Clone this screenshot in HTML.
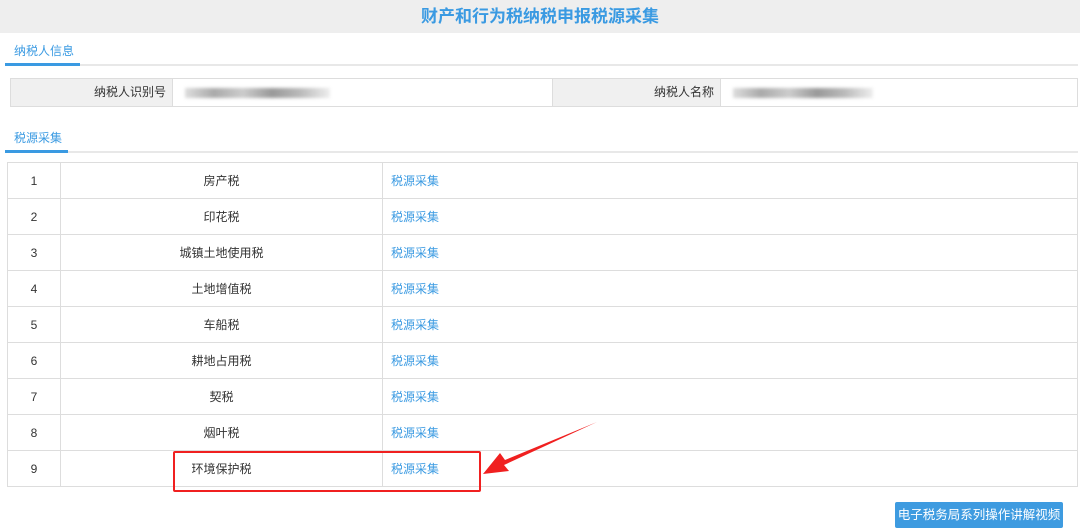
<!DOCTYPE html>
<html><head><meta charset="utf-8"><style>
*{margin:0;padding:0;box-sizing:border-box}
body{width:1080px;height:532px;overflow:hidden;background:#fff;font-family:"Liberation Sans","Noto Sans CJK SC",sans-serif;font-size:12px;color:#333;position:relative}
.hdr{position:absolute;left:0;top:0;width:1080px;height:33px;background:#eeeeee;text-align:center;line-height:34px;color:#3a9ae2;font-size:17px;font-weight:bold}
.tab{position:absolute;left:5px;height:2px;background:#e8e8e8;width:1073px}
.tabu{position:absolute;left:5px;height:3px;background:#3a9ae2}
.tt{position:absolute;left:14px;color:#3a9ae2;font-size:12px}
.info{position:absolute;left:10px;top:78px;width:1068px;height:29px;border:1px solid #ddd;display:flex}
.info div{height:27px;line-height:27px}
.lb{background:#f0f0f0;text-align:right;padding-right:6px;border-right:1px solid #ddd}
.blur{position:absolute;height:10px;background:linear-gradient(90deg,#ddd,#aaa 20%,#ccc 40%,#999 60%,#bbb 80%,#eee);filter:blur(1.5px)}
table{position:absolute;left:7px;top:162px;width:1071px;border-collapse:collapse}
td{border:1px solid #ddd;height:36px;font-size:12px}
td.n{width:53px;text-align:center}
td.m{width:322px;text-align:center}
td.l{padding-left:8px;color:#3a9ae2}
.btn{position:absolute;left:895px;top:502px;width:168px;height:26px;background:#3e9be0;color:#fff;text-align:center;line-height:26px;font-size:12.5px;border-radius:2px}
</style></head><body>
<div class="hdr">财产和行为税纳税申报税源采集</div>
<div class="tt" style="top:42px">纳税人信息</div>
<div class="tab" style="top:64px"></div><div class="tabu" style="top:63px;width:75px"></div>
<div class="info">
<div class="lb" style="width:162px">纳税人识别号</div>
<div style="width:380px;border-right:1px solid #ddd"></div>
<div class="lb" style="width:168px">纳税人名称</div>
<div style="flex:1"></div>
</div>
<div class="blur" style="left:185px;top:88px;width:145px"></div>
<div class="blur" style="left:733px;top:88px;width:140px"></div>
<div class="tt" style="top:129px">税源采集</div>
<div class="tab" style="top:151px"></div><div class="tabu" style="top:150px;width:63px"></div>
<table>
<tr><td class="n">1</td><td class="m">房产税</td><td class="l">税源采集</td></tr>
<tr><td class="n">2</td><td class="m">印花税</td><td class="l">税源采集</td></tr>
<tr><td class="n">3</td><td class="m">城镇土地使用税</td><td class="l">税源采集</td></tr>
<tr><td class="n">4</td><td class="m">土地增值税</td><td class="l">税源采集</td></tr>
<tr><td class="n">5</td><td class="m">车船税</td><td class="l">税源采集</td></tr>
<tr><td class="n">6</td><td class="m">耕地占用税</td><td class="l">税源采集</td></tr>
<tr><td class="n">7</td><td class="m">契税</td><td class="l">税源采集</td></tr>
<tr><td class="n">8</td><td class="m">烟叶税</td><td class="l">税源采集</td></tr>
<tr><td class="n">9</td><td class="m">环境保护税</td><td class="l">税源采集</td></tr>
</table>
<div style="position:absolute;left:173px;top:451px;width:308px;height:41px;border:2px solid #f02020;border-radius:2px"></div>
<svg style="position:absolute;left:0;top:0" width="1080" height="532"><polygon points="597,422 505,460 500,453 483,474 509,471 504,465" fill="#f02020"/></svg>
<div class="btn">电子税务局系列操作讲解视频</div>
</body></html>
